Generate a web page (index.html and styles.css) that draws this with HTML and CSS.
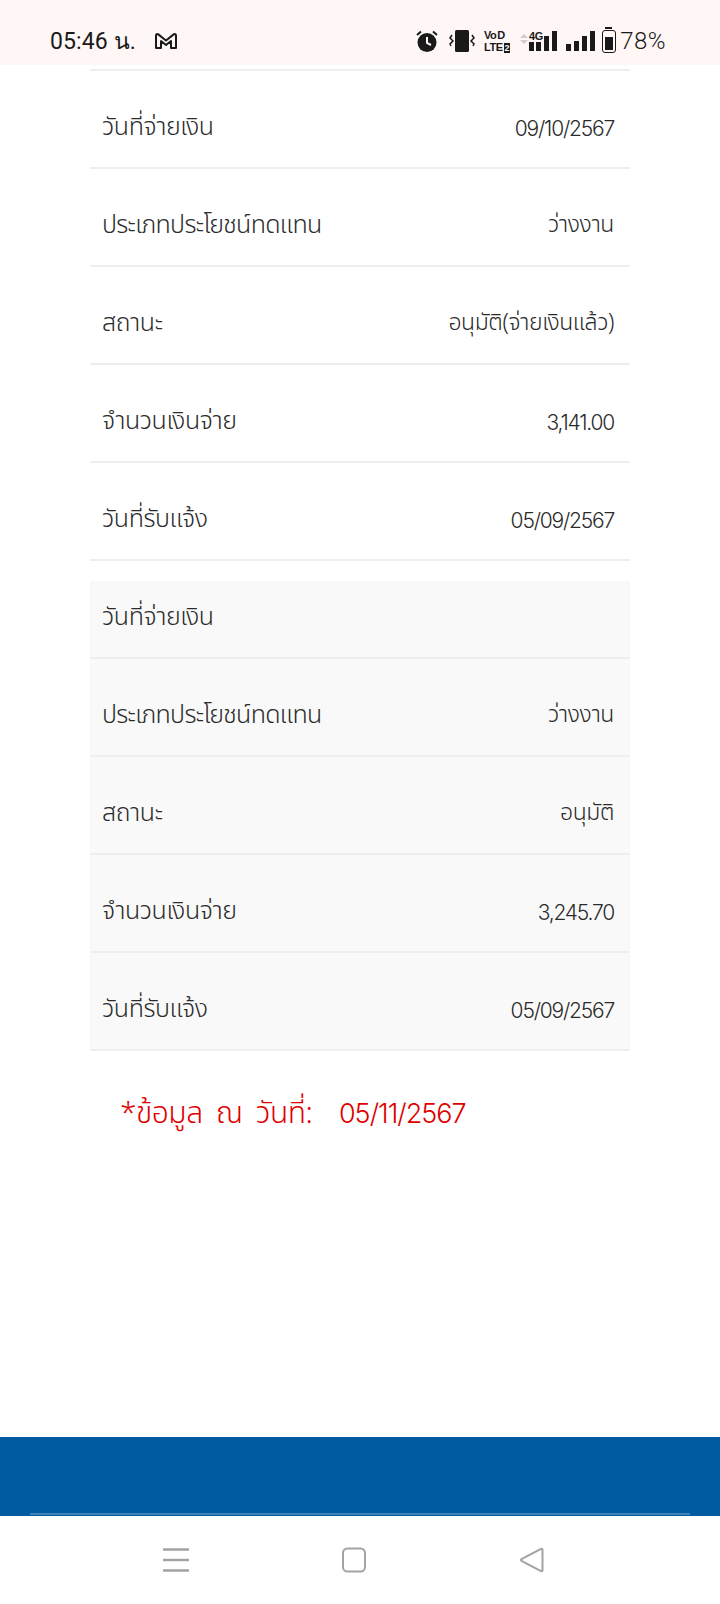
FILE: index.html
```html
<!DOCTYPE html>
<html lang="th">
  <head>
    <meta charset="UTF-8" />
    <meta name="viewport" content="width=device-width, initial-scale=1.0" />
    <title>ข้อมูลการจ่ายเงิน</title>
    <link rel="stylesheet" href="styles.css">
  </head>
  <body>
    <header class="status-bar">
      <div class="status-left">
        <span class="status-time">05:46 น.</span>
        <svg class="icon-mail" width="24" height="18" viewBox="0 0 24 18">
          <path d="M2 16V3.500c0-1.200 1.300-1.800 2.300-1.100L12 8.500l7.700-6.100c1-.7 2.300-.1 2.300 1.100V16h-5V9l-5 4-5-4v7z" fill="none" stroke="#1a1a1a" stroke-width="2" stroke-linejoin="round" />
        </svg>
      </div>
      <div class="status-right">
        <svg width="24" height="24" viewBox="0 0 24 24">
          <circle cx="12" cy="13.500" r="9.500" fill="#1a1a1a" />
          <path d="M12 8v6l4 2" fill="none" stroke="#fff7f5" stroke-width="2" />
          <path d="M2 6l4-3.500M22 6l-4-3.500" stroke="#1a1a1a" stroke-width="2" />
        </svg>
        <svg class="icon-vibrate" width="26" height="24" viewBox="0 0 26 24">
          <rect x="6" y="1" width="14" height="22" rx="1.500" fill="#1a1a1a" />
          <path d="M3 6l-2 3 3 3-3 3 1 2M23 6l2 3-3 3 3 3-1 2" fill="none" stroke="#1a1a1a" stroke-width="1.500" />
        </svg>
        <div class="volte">
          <span>Vo<b>D</b></span>
          <span>LTE<b class="sim">2</b></span>
        </div>
        <div class="signal signal-4g">
          <span class="arrows">
            <i class="arrow-up"></i>
            <i class="arrow-down"></i>
          </span>
          <div class="signal-4g-stack">
            <span class="label-4g">4G</span>
            <div class="bars-small"><i></i><i></i></div>
          </div>
          <div class="bars">
            <i class="bar-3"></i>
            <i class="bar-4"></i>
          </div>
        </div>
        <div class="bars bars-sim2">
          <i class="bar-1"></i>
          <i class="bar-2"></i>
          <i class="bar-3"></i>
          <i class="bar-4"></i>
        </div>
        <div class="battery"><div class="battery-level"></div></div>
        <span class="battery-text">78%</span>
      </div>
    </header>

    <main class="content">
      <div class="table">
        <div class="row row-cut"></div>
        <div class="row"><span>วันที่จ่ายเงิน</span><span class="value num">09/10/2567</span></div>
        <div class="row"><span class="label-long">ประเภทประโยชน์ทดแทน</span><span class="value">ว่างงาน</span></div>
        <div class="row"><span>สถานะ</span><span class="value">อนุมัติ(จ่ายเงินแล้ว)</span></div>
        <div class="row"><span>จำนวนเงินจ่าย</span><span class="value num">3,141.00</span></div>
        <div class="row"><span>วันที่รับแจ้ง</span><span class="value num">05/09/2567</span></div>
      </div>
      <div class="table table-alt">
        <div class="row row-short"><span>วันที่จ่ายเงิน</span></div>
        <div class="row"><span class="label-long">ประเภทประโยชน์ทดแทน</span><span class="value">ว่างงาน</span></div>
        <div class="row"><span>สถานะ</span><span class="value">อนุมัติ</span></div>
        <div class="row"><span>จำนวนเงินจ่าย</span><span class="value num">3,245.70</span></div>
        <div class="row"><span>วันที่รับแจ้ง</span><span class="value num">05/09/2567</span></div>
      </div>
      <p class="note">*ข้อมูล ณ วันที่: &nbsp;<span class="note-date">05/11/2567</span></p>
    </main>

    <footer class="site-footer"><div class="footer-line"></div></footer>

    <nav class="nav-bar">
      <svg width="26" height="24" viewBox="0 0 26 24">
        <path d="M0 1.500h26M0 12h26M0 22.500h26" stroke="#a3a3a3" stroke-width="2.500" />
      </svg>
      <svg width="26" height="26" viewBox="0 0 26 26">
        <rect x="2" y="1.500" width="22" height="23" rx="4.500" fill="none" stroke="#a3a3a3" stroke-width="2" />
      </svg>
      <svg width="26" height="26" viewBox="0 0 26 26">
        <path d="M23.500 2.500v21a1 1 0 0 1-1.500.6L2.500 14a1.200 1.200 0 0 1 0-2L22 1.900a1 1 0 0 1 1.500.6z" fill="none" stroke="#a3a3a3" stroke-width="2" />
      </svg>
    </nav>
  </body>
</html>
```

FILE: styles.css
```css
* {
  margin: 0;
  padding: 0;
  box-sizing: border-box;
}
body {
  width: 720px;
  height: 1604px;
  display: flex;
  flex-direction: column;
  background-color: #fff;
  font-family: "Noto Sans Thai", "Noto Sans Thai Looped", "Noto Sans", "DejaVu Sans", sans-serif;
  color: #2b2b2b;
  overflow: hidden;
}
.status-bar {
  height: 65px;
  flex-shrink: 0;
  display: flex;
  justify-content: space-between;
  align-items: center;
  padding: 17px 54px 0 50px;
  background-color: #fff7f5;
  color: #1a1a1a;
}
.status-left {
  display: flex;
  align-items: center;
  gap: 18px;
}
.status-time {
  font-family: Roboto, "Noto Sans", sans-serif;
  font-size: 23px;
  font-weight: 400;
  letter-spacing: 0.1px;
}
.status-right {
  display: flex;
  align-items: center;
  gap: 7px;
}
.icon-vibrate {
  margin-left: 3px;
}
.volte {
  display: flex;
  flex-direction: column;
  margin-left: 2px;
  font-family: "Liberation Sans Narrow", "Liberation Sans", sans-serif;
  font-size: 11px;
  font-weight: 700;
  line-height: 12px;
  letter-spacing: -0.5px;
}
.volte b {
  margin-left: 1px;
}
.volte .sim {
  padding: 0 1px;
  color: #fff7f5;
  background-color: #1a1a1a;
  font-size: 9px;
}
.signal {
  display: flex;
  align-items: flex-end;
  gap: 1px;
  margin-left: 3px;
}
.arrows {
  display: flex;
  flex-direction: column;
  gap: 2px;
  align-self: flex-start;
  margin-top: 3px;
}
.arrows i {
  display: block;
  border-left: 4px solid transparent;
  border-right: 4px solid transparent;
}
.arrow-up {
  border-bottom: 4px solid #cfcfcf;
}
.arrow-down {
  border-top: 4px solid #cfcfcf;
}
.signal-4g-stack {
  display: flex;
  flex-direction: column;
  gap: 1px;
}
.label-4g {
  font-family: "Liberation Sans Narrow", "Liberation Sans", sans-serif;
  font-size: 11px;
  font-weight: 700;
  line-height: 10px;
  letter-spacing: -0.3px;
}
.bars-small {
  display: flex;
  align-items: flex-end;
  gap: 2px;
}
.bars-small i {
  width: 5px;
  height: 9px;
  background-color: #1a1a1a;
}
.bars {
  display: flex;
  align-items: flex-end;
  gap: 3px;
}
.bars i {
  display: block;
  width: 5px;
  background-color: #1a1a1a;
}
.bar-1 { height: 7px; }
.bar-2 { height: 10px; }
.bar-3 { height: 15px; }
.bar-4 { height: 20px; }
.bars-sim2 {
  margin-left: 2px;
}
.battery {
  position: relative;
  width: 14px;
  height: 23px;
  padding: 6px 2px 2px;
  border: 1.5px solid #1a1a1a;
  border-radius: 3px;
}
.battery::before {
  content: "";
  position: absolute;
  top: -4px;
  left: 2px;
  width: 7px;
  height: 2px;
  background-color: #1a1a1a;
}
.battery-level {
  height: 100%;
  background-color: #1a1a1a;
}
.battery-text {
  margin-left: -3px;
  font-family: Roboto, "Noto Sans", sans-serif;
  font-size: 24px;
  font-weight: 300;
  letter-spacing: 0.5px;
}
.content {
  flex: 1;
  padding: 0 90px;
}
.table {
  display: flex;
  flex-direction: column;
}
.table-alt {
  margin-top: 20px;
  background-color: #f9f9f9;
}
.row {
  height: 98px;
  display: flex;
  justify-content: space-between;
  align-items: center;
  padding: 16px 16px 0 12px;
  border-bottom: 2px solid #eee;
  font-size: 25px;
  font-weight: 300;
  letter-spacing: -0.4px;
}
.row-cut {
  height: 6px;
  padding: 0;
}
.row-short {
  height: 78px;
  padding: 0 16px 5px 12px;
}
.label-long {
  letter-spacing: -0.7px;
}
.value {
  font-size: 23px;
}
.num {
  padding-top: 2px;
  font-family: Inter, "Noto Sans", sans-serif;
  font-size: 21px;
  letter-spacing: -1.2px;
}
.note {
  margin-top: 40px;
  padding-left: 30px;
  font-size: 30px;
  font-weight: 300;
  letter-spacing: -0.5px;
  word-spacing: 6px;
  color: #df0000;
}
.note-date {
  font-family: Inter, "Noto Sans", sans-serif;
  font-size: 27px;
  letter-spacing: -1px;
}
.site-footer {
  height: 79px;
  flex-shrink: 0;
  display: flex;
  align-items: flex-end;
  justify-content: center;
  padding-bottom: 1px;
  background-color: #005ba1;
}
.footer-line {
  width: 660px;
  height: 2px;
  background-color: #3e80b7;
}
.nav-bar {
  height: 88px;
  flex-shrink: 0;
  display: flex;
  justify-content: center;
  align-items: center;
  gap: 152px;
  padding: 0 12px 1px 0;
  background-color: #fff;
}
```
